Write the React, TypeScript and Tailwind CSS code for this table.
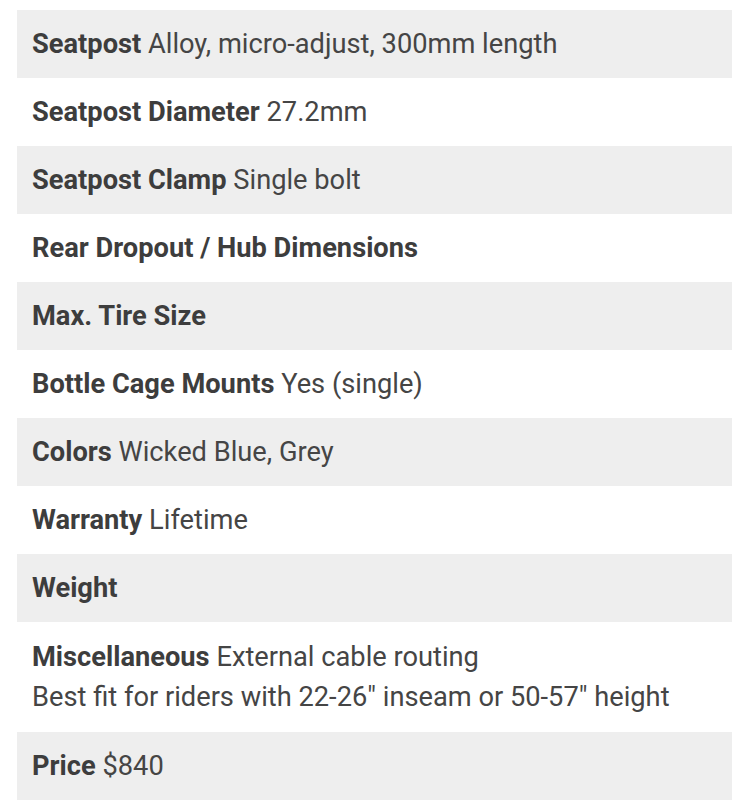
const specs: { label: string; value?: string; extra?: string }[] = [
  { label: "Seatpost", value: "Alloy, micro-adjust, 300mm length" },
  { label: "Seatpost Diameter", value: "27.2mm" },
  { label: "Seatpost Clamp", value: "Single bolt" },
  { label: "Rear Dropout / Hub Dimensions" },
  { label: "Max. Tire Size" },
  { label: "Bottle Cage Mounts", value: "Yes (single)" },
  { label: "Colors", value: "Wicked Blue, Grey" },
  { label: "Warranty", value: "Lifetime" },
  { label: "Weight" },
  {
    label: "Miscellaneous",
    value: "External cable routing",
    extra: 'Best fit for riders with 22-26" inseam or 50-57" height',
  },
  { label: "Price", value: "$840" },
];

export default function App() {
  return (
    <div className="min-h-[800px] bg-white px-[17px] pt-[10px] font-['Roboto',sans-serif] text-[27.25px] leading-[40px] text-[#454545]">
      <div className="flex w-[715px] flex-col">
        {specs.map((spec, i) => (
          <div
            className={`px-[15px] ${spec.extra ? "pt-[15px] pb-[15px]" : "py-[14px]"} ${i % 2 === 0 ? "bg-[#eeeeee]" : "bg-white"}`}
            key={spec.label}
          >
            <div>
              <span className="font-bold text-[#3d3d3d]">{spec.label}</span>
              {spec.value ? <span> {spec.value}</span> : null}
            </div>
            {spec.extra ? <div>{spec.extra}</div> : null}
          </div>
        ))}
      </div>
    </div>
  );
}
